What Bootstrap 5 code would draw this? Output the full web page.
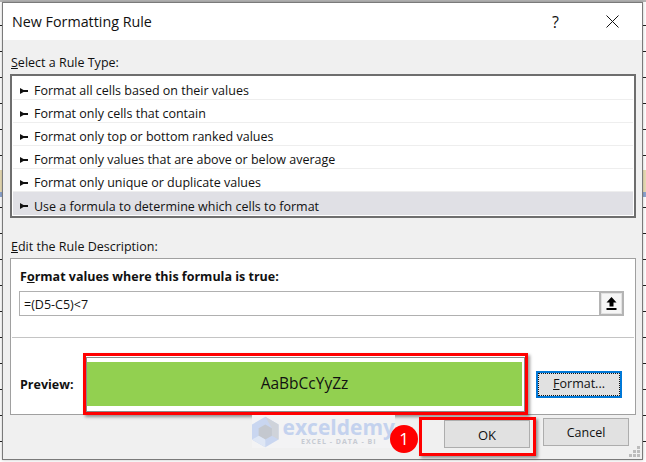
<!DOCTYPE html>
<html lang="en">
<head>
  <meta charset="UTF-8">
  <meta name="viewport" content="width=device-width, initial-scale=1">
  <title>New Formatting Rule</title>
  <link href="https://cdn.jsdelivr.net/npm/bootstrap@5.3.0/dist/css/bootstrap.min.css" rel="stylesheet">
  <style>
    html, body { height: 462px; overflow: hidden; }
    body {
      background-color: #fff;
      background-image:
        linear-gradient(180deg, #b5b5b5 0 2px, transparent 2px),
        linear-gradient(180deg, transparent 170px, #e8dcb4 170px 192px, #8ea6d0 192px 197px, transparent 197px),
        repeating-linear-gradient(180deg, transparent 0 25px, #222 25px 26px);
      font-family: "Open Sans", "Noto Sans", sans-serif;
      font-size: 12.5px;
      color: #111;
    }
    .sheet { width: 646px; height: 462px; padding: 2px 3px 2px 2px; }
    .dlg { position: relative; height: 458px; background: #f0f0f0; border: 1px solid #7a7a7a; box-shadow: 0 0 3px rgba(0,0,0,.25); }
    .dlg-title { height: 37px; background: #fff; padding-left: 9px; }
    .dlg-title h1 { font-size: 14.3px; font-weight: 400; margin: 0; font-family: inherit; }
    .title-btns { gap: 47px; padding-right: 23px; }
    .help-mark { font-size: 16px; line-height: 1; }
    .dlg-body { padding: 12px 6px 0 7px; }
    .field-label { height: 21px; line-height: 21px; padding-left: 1px; margin: 0; }
    .rule-list { height: 144px; border: 2px solid #6e6e6e; background: #fff; padding: 1px 1px 2px; width: 626px; margin-top: 1px; }
    .rule-row { height: 23px; gap: 6px; padding: 5px 0 0 7px; border-bottom: 1px solid #eee; line-height: 17px; }
    .rule-row:last-child { border-bottom: 0; }
    .rule-row.picked { background: #e0e0e5; }
    .desc-label { margin-top: 18px; height: 21px; line-height: 21px; padding-left: 1px; }
    .desc-panel { height: 157px; width: 626px; border: 1px solid #a0a0a0; background: #fff; margin-top: 1px; }
    .formula-head { font-weight: 700; padding: 8px 0 0 9px; height: 32px; line-height: 20px; }
    .formula-box { margin: 0 11px 0 8px; height: 25px; border: 1px solid #b0b0b0; }
    .formula-text { padding-left: 4px; line-height: 25px; }
    .ref-btn { width: 25px; height: 25px; margin: -1px; border: 2px solid #b4b4b4; background: #f6f6f6; box-shadow: inset 0 0 0 1px #e2e2e2; }
    .formula-rule { margin: 21px 1px 0; border-top: 1px solid #c4c4c4; height: 1px; }
    .preview-row { padding: 15px 0 0 9px; }
    .preview-label { font-weight: 700; width: 63px; padding-top: 2px; }
    .red-frame { border: 3px solid #f00; box-shadow: 2px 2px 3px rgba(0,0,0,.4); }
    .preview-outer { width: 445px; height: 62px; background: #fff; padding: 1px 0 0; }
    .preview-inner { height: 100%; border: 1px solid #8a8a8a; padding: 4px 2px 5px 0; background: #fff; }
    .preview-fill { height: 100%; background: #92d050; font-size: 15.5px; }
    .win-btn { width: 86px; height: 28px; border: 1px solid #adadad; background: #e1e1e1; padding: 3px 0 0; color: #111; font-size: 12.5px; }
    .format-btn { border: 2px solid #0078d7; outline: 1px dotted #111; outline-offset: -3px; height: 27px; margin-left: 8px; padding-top: 1px; }
    .dlg-foot { padding: 2px 13px 0 0; gap: 7px; }
    .ok-frame { width: 117px; height: 39px; padding: 0 3px 5px 22px; }
    .ok-btn { font-size: 13px; }
    .step-dot { position: relative; width: 28px; height: 28px; border-radius: 50%; background: #f00; color: #fff; font-size: 17px; margin-right: -6px; margin-top: 8px; }
    .cancel-btn { margin-top: 1px; }
    .wm { position: absolute; left: 249px; top: 412px; width: 143px; height: 33px; gap: 4px; background: #f3f3f4; }
    .wm-name { font-size: 21px; font-weight: 700; line-height: 20px; color: #c4d2ee; }
    .wm-sub { font-size: 7px; line-height: 9px; color: #c6cad2; font-weight: 700; letter-spacing: 1px; text-align: center; white-space: nowrap; }
    .grip { position: absolute; right: 1px; bottom: 1px; }
    u { text-underline-offset: 1px; }
  </style>
</head>
<body class="m-0">
  <div class="sheet">
    <div class="dlg">
      <div class="dlg-title d-flex align-items-center justify-content-between">
        <h1>New Formatting Rule</h1>
        <div class="title-btns d-flex align-items-center">
          <span class="help-mark">?</span>
          <svg width="13" height="13" viewBox="0 0 13 13"><path d="M.5.5l12 12M12.5.5l-12 12" stroke="#111" fill="none"/></svg>
        </div>
      </div>
      <div class="dlg-body">
        <p class="field-label"><u>S</u>elect a Rule Type:</p>
        <div class="rule-list">
          <div class="rule-row d-flex align-items-center"><svg width="8" height="6" viewBox="0 0 8 6"><path d="M0 0l3.5 2H8v2H3.5L0 6z" fill="#111"/></svg><span>Format all cells based on their values</span></div>
          <div class="rule-row d-flex align-items-center"><svg width="8" height="6" viewBox="0 0 8 6"><path d="M0 0l3.5 2H8v2H3.5L0 6z" fill="#111"/></svg><span>Format only cells that contain</span></div>
          <div class="rule-row d-flex align-items-center"><svg width="8" height="6" viewBox="0 0 8 6"><path d="M0 0l3.5 2H8v2H3.5L0 6z" fill="#111"/></svg><span>Format only top or bottom ranked values</span></div>
          <div class="rule-row d-flex align-items-center"><svg width="8" height="6" viewBox="0 0 8 6"><path d="M0 0l3.5 2H8v2H3.5L0 6z" fill="#111"/></svg><span>Format only values that are above or below average</span></div>
          <div class="rule-row d-flex align-items-center"><svg width="8" height="6" viewBox="0 0 8 6"><path d="M0 0l3.5 2H8v2H3.5L0 6z" fill="#111"/></svg><span>Format only unique or duplicate values</span></div>
          <div class="rule-row picked d-flex align-items-center"><svg width="8" height="6" viewBox="0 0 8 6"><path d="M0 0l3.5 2H8v2H3.5L0 6z" fill="#111"/></svg><span>Use a formula to determine which cells to format</span></div>
        </div>
        <p class="desc-label mb-0"><u>E</u>dit the Rule Description:</p>
        <div class="desc-panel">
          <div class="formula-head">F<u>o</u>rmat values where this formula is true:</div>
          <div class="formula-box d-flex justify-content-between">
            <span class="formula-text">=(D5-C5)&lt;7</span>
            <span class="ref-btn d-flex align-items-center justify-content-center">
              <svg width="11" height="13" viewBox="0 0 11 13"><path d="M5.5 0L10.5 5.5H7.5V9.5H3.5V5.5H.5zM.5 11H10.5V13H.5z" fill="#000"/></svg>
            </span>
          </div>
          <div class="formula-rule"></div>
          <div class="preview-row d-flex align-items-center">
            <span class="preview-label">Preview:</span>
            <div class="red-frame preview-outer">
              <div class="preview-inner">
                <div class="preview-fill d-flex align-items-center justify-content-center">AaBbCcYyZz</div>
              </div>
            </div>
            <button class="win-btn format-btn" type="button"><u>F</u>ormat...</button>
          </div>
        </div>
      </div>
      <div class="wm d-flex align-items-center">
        <svg width="28" height="32" viewBox="0 0 28 32"><path d="M14 0L28 8V24L14 32L0 24V8z" fill="#c9d6f0"/><path d="M14 0L28 8V24L21 20V12z" fill="#cfd3da"/><path d="M7 12l7-4 7 4v8l-7 4-7-4z" fill="#c4c8cf"/><path d="M0 24l7-4 7 4v8z" fill="#dfe7f5"/></svg>
        <div>
          <div class="wm-name">exceldemy</div>
          <div class="wm-sub">EXCEL - DATA - BI</div>
        </div>
      </div>
      <div class="dlg-foot d-flex justify-content-end align-items-start">
        <div class="step-dot d-flex align-items-center justify-content-center">1</div>
        <div class="red-frame ok-frame d-flex align-items-end">
          <button class="win-btn ok-btn" type="button">OK</button>
        </div>
        <button class="win-btn cancel-btn" type="button">Cancel</button>
      </div>
      <svg class="grip" width="12" height="12" viewBox="0 0 12 12"><path d="M8 0h3v3H8zM4 4h3v3H4zM8 4h3v3H8zM0 8h3v3H0zM4 8h3v3H4zM8 8h3v3H8z" fill="#bcbcbc"/></svg>
    </div>
  </div>
  <script src="https://cdn.jsdelivr.net/npm/bootstrap@5.3.0/dist/js/bootstrap.bundle.min.js"></script>
</body>
</html>
